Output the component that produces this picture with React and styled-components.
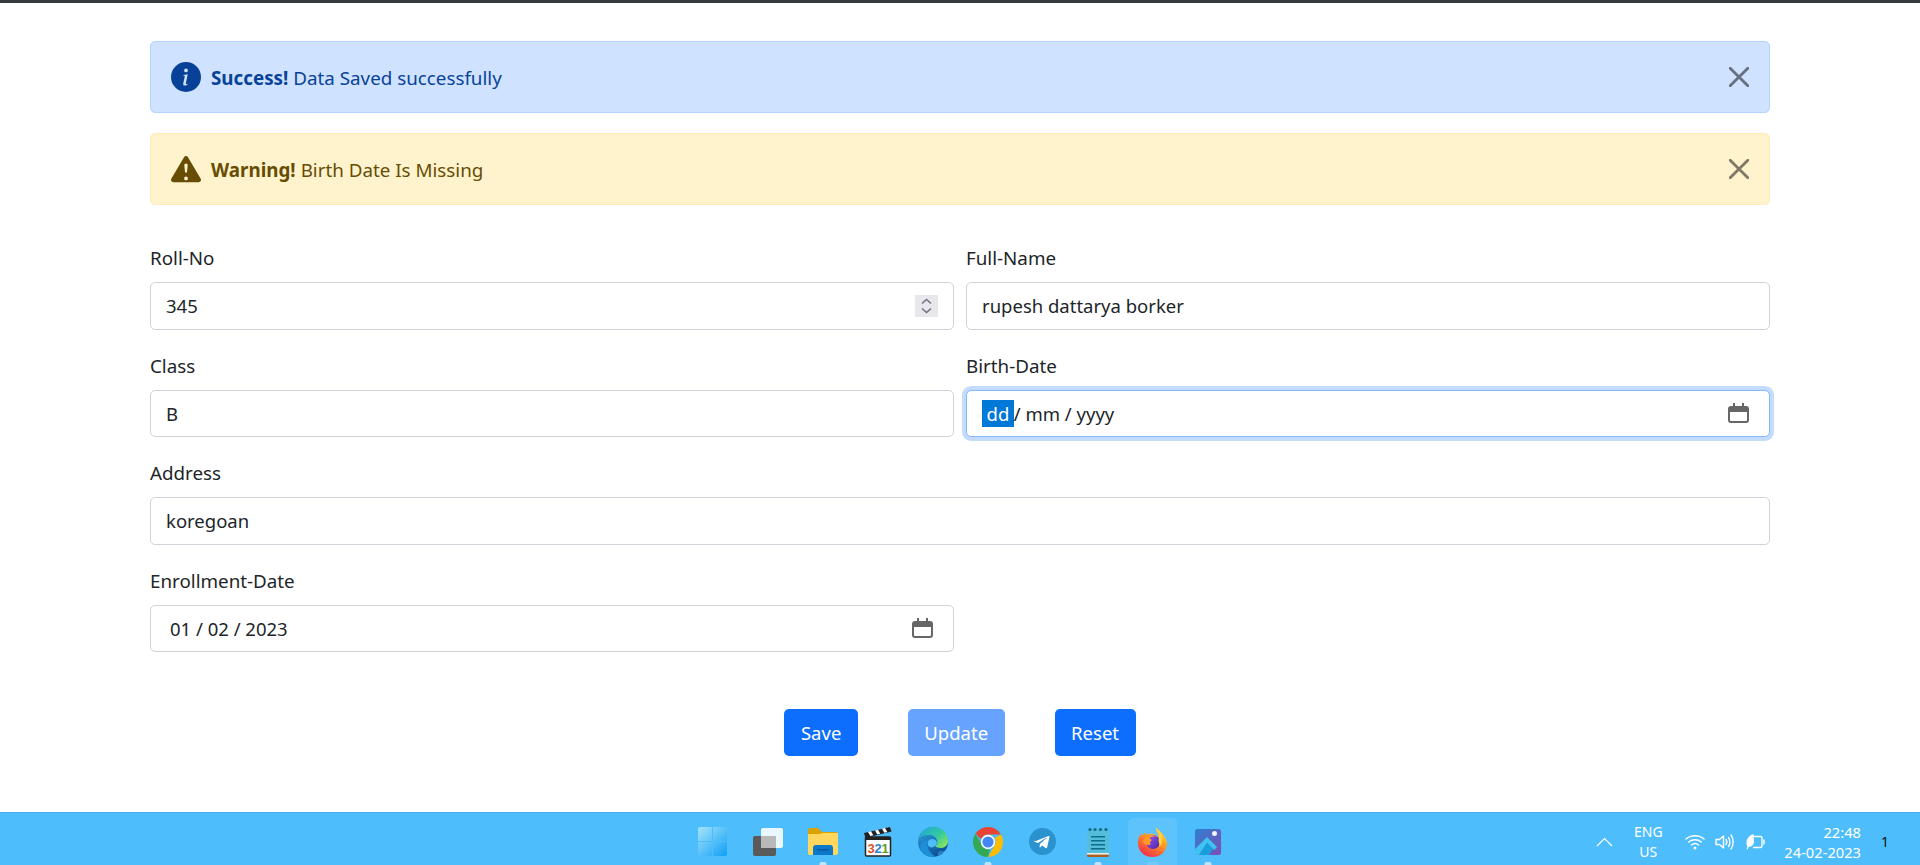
import React from 'react';
import styled, { createGlobalStyle } from 'styled-components';

const GlobalStyle = createGlobalStyle`
  * { box-sizing: border-box; }
  html, body { margin: 0; padding: 0; height: 865px; background: #fff; overflow: hidden; }
  body {
    font-family: 'Noto Sans', 'Open Sans', 'Liberation Sans', sans-serif;
    color: #212529;
  }
`;

const Page = styled.div`
  height: 865px;
  display: flex;
  flex-direction: column;
  border-top: 3px solid #343a40;
`;

const Container = styled.main`
  flex: 1;
  padding: 38px 150px 0;
`;

const Alert = styled.div`
  height: 72px;
  margin-bottom: 20px;
  padding: 0 20px;
  display: flex;
  align-items: center;
  border: 1px solid ${p => (p.$kind === 'warning' ? '#ffecb5' : '#b6d4fe')};
  border-radius: 5px;
  background: ${p => (p.$kind === 'warning' ? '#fff3cd' : '#cfe2ff')};
  color: ${p => (p.$kind === 'warning' ? '#664d03' : '#084298')};
  font-size: 18.8px;
  svg.lead { flex: none; margin-right: 10px; }
  strong { font-weight: 700; margin-right: 5px; }
`;

const AlertText = styled.span`
  flex: 1;
  padding-top: 2px;
`;

const CloseButton = styled.button`
  width: 20px;
  height: 20px;
  padding: 0;
  border: 0;
  background: none;
  display: flex;
  color: #000;
  opacity: 0.5;
`;

const FormGrid = styled.form`
  margin-top: 37px;
  display: grid;
  grid-template-columns: 1fr 1fr;
  column-gap: 12px;
  row-gap: 20px;
`;

const Field = styled.div`
  grid-column: ${p => (p.$wide ? '1 / -1' : 'auto')};
  display: flex;
  flex-direction: column;
`;

const Label = styled.label`
  height: 30px;
  margin-bottom: 10px;
  font-size: 18.8px;
  line-height: 32px;
`;

const InputBox = styled.div`
  height: 47.5px;
  padding: 0 15px;
  display: flex;
  align-items: center;
  justify-content: space-between;
  border: 1px solid ${p => (p.$focused ? '#86b7fe' : '#ced4da')};
  border-radius: 5px;
  background: #fff;
  font-size: 18.5px;
  box-shadow: ${p => (p.$focused ? '0 0 0 4px rgba(13, 110, 253, 0.25)' : 'none')};
`;

const InputValue = styled.span`
  white-space: pre;
`;

const DateValue = styled.span`
  padding-left: 4px;
  white-space: pre;
`;

const DateSegment = styled.span`
  display: inline-block;
  margin-left: -4px;
  padding: 0 4.5px;
  background: #0078d7;
  color: #fff;
  line-height: 27px;
`;

const Spinner = styled.span`
  width: 23px;
  height: 22px;
  display: flex;
  align-items: center;
  justify-content: center;
  background: #e7e7ec;
`;

const CalendarSlot = styled.span`
  display: flex;
  margin-right: 5px;
`;

const ButtonRow = styled.div`
  margin-top: 57px;
  display: flex;
  justify-content: center;
  gap: 50px;
`;

const Button = styled.button`
  height: 47px;
  padding: 0 16.5px;
  border: 0;
  border-radius: 5px;
  background: ${p => (p.disabled ? '#65a3fe' : '#0d6efd')};
  color: #fff;
  font-family: inherit;
  font-size: 18.5px;
`;

const Taskbar = styled.footer`
  height: 53px;
  padding-top: 5px;
  display: grid;
  grid-template-columns: 1fr auto 1fr;
  align-items: center;
  background: #4dbdfb;
  border-top: 1px solid #48aee8;
`;

const TaskIcons = styled.div`
  grid-column: 2;
  height: 100%;
  display: flex;
`;

const TaskSlot = styled.div`
  position: relative;
  width: 55px;
  height: 100%;
  display: flex;
  align-items: center;
  justify-content: center;
  &::before {
    content: '';
    display: ${p => (p.$active ? 'block' : 'none')};
    position: absolute;
    inset: 0 3px;
    border-radius: 5px 5px 0 0;
    background: rgba(255, 255, 255, 0.1);
  }
  &::after {
    content: '';
    display: ${p => (p.$running ? 'block' : 'none')};
    position: absolute;
    left: 50%;
    bottom: 0;
    width: ${p => (p.$active ? '12px' : '7px')};
    height: 3px;
    border-radius: 2px 2px 0 0;
    transform: translateX(-50%);
    background: ${p => (p.$active ? 'rgba(255, 255, 255, 0.12)' : '#bfe3fb')};
  }
  svg { position: relative; }
`;

const Tray = styled.div`
  grid-column: 3;
  display: flex;
  align-items: center;
  justify-content: flex-end;
  color: #fff;
`;

const Lang = styled.div`
  width: 36px;
  margin: 0 19px 0 17px;
  font-size: 14px;
  line-height: 20px;
  text-align: center;
`;

const TrayIcons = styled.div`
  display: flex;
  gap: 10px;
  margin-right: 19px;
`;

const Clock = styled.div`
  font-size: 14.7px;
  line-height: 20px;
  text-align: right;
`;

const Badge = styled.div`
  width: 59px;
  padding-right: 11px;
  color: #111;
  font-size: 14px;
  text-align: center;
`;

const InfoIcon = () => (
  <svg className="lead" width="30" height="30" viewBox="0 0 16 16" fill="currentColor">
    <path d="M8 16A8 8 0 1 0 8 0a8 8 0 0 0 0 16zm.93-9.41-1 4.7c-.07.34.03.53.3.53.2 0 .48-.07.68-.25l-.09.42c-.29.34-.91.59-1.45.59-.7 0-1-.42-.81-1.31l.74-3.47c.06-.3 0-.4-.3-.47l-.45-.08.08-.38 2.3-.28zM8 5.5a1 1 0 1 1 0-2 1 1 0 0 1 0 2z" />
  </svg>
);

const WarningIcon = () => (
  <svg className="lead" width="30" height="30" viewBox="0 0 16 16" fill="currentColor">
    <path d="M8.98 1.57a1.13 1.13 0 0 0-1.96 0L.16 13.23c-.46.78.1 1.77.98 1.77h13.72c.88 0 1.44-.99.98-1.77L8.98 1.57zM8 5c.54 0 .95.46.9 1l-.35 3.5a.55.55 0 0 1-1.1 0L7.1 6c-.05-.54.36-1 .9-1zm0 7a1 1 0 1 1 0 2 1 1 0 0 1 0-2z" />
  </svg>
);

const CloseIcon = () => (
  <svg width="20" height="20" viewBox="0 0 20 20" fill="none" stroke="currentColor" strokeWidth="2.8" strokeLinecap="round">
    <path d="M1.2 1.2l17.6 17.6M18.8 1.2L1.2 18.800" />
  </svg>
);

const CalendarIcon = () => (
  <svg width="21" height="20" viewBox="0 0 21 20">
    <path fill="#666" d="M5 0h2v3h7V0h2v3h2a3 3 0 0 1 3 3v11a3 3 0 0 1-3 3H3a3 3 0 0 1-3-3V6a3 3 0 0 1 3-3h2zM2 9v8a1 1 0 0 0 1 1h15a1 1 0 0 0 1-1V9z" />
  </svg>
);

const SpinnerIcon = () => (
  <svg width="13" height="18" viewBox="0 0 13 18" fill="none" stroke="#74747e" strokeWidth="1.6">
    <path d="M2 6.5l4.5-4 4.5 4M2 11.5l4.5 4 4.5-4" />
  </svg>
);

const WindowsIcon = () => (
  <svg width="29" height="29" viewBox="0 0 29 29">
    <defs>
      <linearGradient id="win" x1="0" y1="0" x2="1" y2="1">
        <stop offset="0" stopColor="#a5e4fc" />
        <stop offset="1" stopColor="#0f9ff5" />
      </linearGradient>
    </defs>
    <path fill="url(#win)" d="M2 0h12v14H0V2a2 2 0 0 1 2-2zM15 0h12a2 2 0 0 1 2 2v12H15zM0 15h14v14H2a2 2 0 0 1-2-2zM15 15h14v12a2 2 0 0 1-2 2H15z" />
  </svg>
);

const TaskViewIcon = () => (
  <svg width="30" height="28" viewBox="0 0 30 28">
    <rect x="0" y="8" width="23" height="20" rx="2" fill="#5a5a5a" />
    <rect x="8" y="0" width="22" height="20" rx="2" fill="#fff" fillOpacity="0.88" />
    <rect x="8" y="8" width="15" height="12" fill="#b9b9b9" />
  </svg>
);

const FolderIcon = () => (
  <svg width="30" height="27" viewBox="0 0 30 27">
    <path fill="#dba200" d="M0 3a3 3 0 0 1 3-3h7l4 4h13a3 3 0 0 1 3 3v5H0z" />
    <path fill="#ffd75e" d="M0 6h12l3-1h15v20a2 2 0 0 1-2 2H2a2 2 0 0 1-2-2z" />
    <path fill="#0b78c9" d="M5 27v-7a3 3 0 0 1 3-3h14a3 3 0 0 1 3 3v7z" />
    <path fill="#0a5aa0" d="M9 21h12v1.6H9z" />
  </svg>
);

const ClapperIcon = () => (
  <svg width="30" height="30" viewBox="0 0 30 30">
    <rect x="2.500" y="10" width="25" height="19" rx="1" fill="#fff" stroke="#222" strokeWidth="1.500" />
    <path fill="#222" d="M1 6l26-6 1.500 4.500L2.500 11z" />
    <path fill="#fff" d="M5 5l3-.7 2.300 4-3 .7zM12 3.400l3-.7 2.300 4-3 .7zM19 1.800l3-.7 2.300 4-3 .7z" />
    <path fill="#222" d="M2.500 10h25v3h-25z" />
    <text x="15" y="26" textAnchor="middle" fontFamily="'Liberation Sans', sans-serif" fontSize="13" fontWeight="700" letterSpacing="-0.3">
      <tspan fill="#d9541e">3</tspan>
      <tspan fill="#2f7fc4">2</tspan>
      <tspan fill="#5aa02c">1</tspan>
    </text>
  </svg>
);

const EdgeIcon = () => (
  <svg width="30" height="30" viewBox="0 0 30 30">
    <defs>
      <linearGradient id="edge" x1="0" y1="0" x2="0.6" y2="1">
        <stop offset="0" stopColor="#2fa8e4" />
        <stop offset="1" stopColor="#0c4f96" />
      </linearGradient>
      <linearGradient id="edgeGreen" x1="0" y1="0" x2="1" y2="0.8">
        <stop offset="0" stopColor="#1ea7d6" />
        <stop offset="0.6" stopColor="#35c9a0" />
        <stop offset="1" stopColor="#86e65f" />
      </linearGradient>
    </defs>
    <circle cx="15" cy="15" r="15" fill="url(#edge)" />
    <path fill="url(#edgeGreen)" d="M1 11C3 4 9 0 15 0c9 0 15 6 15 14 0 4-3 7-7 7-3 0-5-1-6-2 2-1 3-3 2-6-1-3-4-5-8-5-4 0-8 1-10 3z" />
    <path fill="#4dbdfb" d="M17 19c-2 2-6 2-7-1-1-3 1-6 4-6 3 0 5 2 5 4 0 1-1 2-2 3z" />
    <path fill="#1c8fd6" d="M10 13c-2 6 1 13 7 16-1 .6-1.500 1-2 1-6 0-11-3-13-9 0-5 4-8 8-8z" />
    <path fill="#4dbdfb" fillOpacity="0.4" d="M20 29c4-1 7-3 9-6-3 1-5 1-7 1-2 1-3 3-2 5z" />
  </svg>
);

const ChromeIcon = () => (
  <svg width="30" height="30" viewBox="0 0 30 30">
    <path fill="#ea4335" d="M15 0a15 15 0 0 1 13 7.5H15a7.5 7.5 0 0 0-7 4.8L2.6 6.6A15 15 0 0 1 15 0z" />
    <path fill="#fbbc04" d="M28 7.5A15 15 0 0 1 15 30l6.5-11.2A7.5 7.5 0 0 0 21.5 11z" />
    <path fill="#34a853" d="M15 30A15 15 0 0 1 2.6 6.6L9 18a7.5 7.5 0 0 0 8 4.3z" />
    <circle cx="15" cy="15" r="7.2" fill="#fff" />
    <circle cx="15" cy="15" r="5.6" fill="#4285f4" />
  </svg>
);

const TelegramIcon = () => (
  <svg width="27" height="27" viewBox="0 0 27 27">
    <circle cx="13.5" cy="13.5" r="13.5" fill="#2a93cf" />
    <path fill="#fff" d="M5.5 13.6l14-5.6c.7-.2 1.2.2 1 1l-2.4 10.6c-.2.8-.7.9-1.3.6l-3.6-2.7-1.8 1.7c-.3.3-.5.4-.8.4l.3-3.6 6.6-6c.3-.3 0-.4-.4-.2l-8.1 5.1-3.5-1.1c-.8-.2-.8-.7 0-1.2z" />
  </svg>
);

const NotepadIcon = () => (
  <svg width="22" height="30" viewBox="0 0 22 30">
    <rect x="0" y="2" width="22" height="26" rx="1.5" fill="#55bdd8" />
    <path fill="#a85f20" d="M0 26h22v2.5a1.5 1.5 0 0 1-1.5 1.5h-19A1.5 1.5 0 0 1 0 28.500z" />
    <path fill="#eee" d="M0 26h22v1.600H0z" />
    <circle cx="3" cy="2.500" r="1.600" fill="#0d6c8e" />
    <circle cx="8" cy="2.500" r="1.600" fill="#0d6c8e" />
    <circle cx="13.500" cy="2.500" r="1.600" fill="#0d6c8e" />
    <circle cx="19" cy="2.500" r="1.600" fill="#0d6c8e" />
    <path fill="#0d6c8e" d="M4 9h14v1.600H4zM4 13h14v1.600H4zM4 17h14v1.600H4zM4 21h14v1.600H4z" />
  </svg>
);

const FirefoxIcon = () => (
  <svg width="29" height="30" viewBox="0 0 29 30">
    <defs>
      <linearGradient id="fox" x1="0.8" y1="0" x2="0.2" y2="1">
        <stop offset="0" stopColor="#ffe14a" />
        <stop offset="0.4" stopColor="#ff9b1f" />
        <stop offset="1" stopColor="#f2254f" />
      </linearGradient>
      <linearGradient id="foxCore" x1="0" y1="0" x2="1" y2="1">
        <stop offset="0" stopColor="#9a5cf5" />
        <stop offset="1" stopColor="#4b22a8" />
      </linearGradient>
    </defs>
    <path fill="url(#fox)" d="M18 0c1 3 5 4 8 9 2 3 3 5 3 7 0 8-6 14-14.500 14S0 24 0 16c0-3 .5-5 1.500-7 .5-1 1-2 1.500-2.500 0 1 .3 2 1 2.500.7-2 2.500-3 5-3.500-1 .8-1.500 1.500-1.500 2.500 2-1 5-1.500 7.500-1 2.500.5 4.500 2 5.500 3.500C21 7 17 4 18 0z" />
    <circle cx="15" cy="15" r="7" fill="url(#foxCore)" />
    <path fill="#ff9a24" d="M5 15c.5-4 5-7 9-6.800 2 .1 3.500.7 4.500 1.800-2.500-.8-6-.5-7 2 1 0 2 .3 2.500 1-2 1-2.500 3-1.500 5-4 .5-7-1-7.500-3z" />
    <path fill="#ffd53d" d="M21 3c2 3 4 7 3 12-.5 3-2 4-3 5 .5-2 .5-4-.5-6 1-4 .5-8 .5-11z" />
  </svg>
);

const PhotosIcon = () => (
  <svg width="26" height="26" viewBox="0 0 26 26">
    <defs>
      <linearGradient id="photo" x1="0" y1="0" x2="1" y2="1">
        <stop offset="0" stopColor="#2d7fd1" />
        <stop offset="1" stopColor="#7c4fb5" />
      </linearGradient>
    </defs>
    <rect width="26" height="26" rx="2.500" fill="url(#photo)" />
    <circle cx="19.500" cy="4.500" r="2.500" fill="#f3f3f3" />
    <path fill="#3fc4f2" d="M0 20L12 8l10 10-3 3-7-7-8 12H2a2 2 0 0 1-2-2z" />
    <path fill="#17a0dc" d="M12 14l6 6-4 6H4z" />
  </svg>
);

const WifiIcon = () => (
  <svg width="20" height="20" viewBox="0 0 20 20" fill="none" stroke="#fff" strokeWidth="1.500" strokeLinecap="round">
    <path d="M1 7c5-4.500 13-4.500 18 0M3.800 10c3.500-3 9-3 12.400 0M6.500 13c2-1.600 5-1.600 7 0" />
    <circle cx="10" cy="16" r="1.500" fill="#fff" stroke="none" />
  </svg>
);

const VolumeIcon = () => (
  <svg width="20" height="20" viewBox="0 0 20 20" fill="none" stroke="#fff" strokeWidth="1.400" strokeLinecap="round" strokeLinejoin="round">
    <path d="M1 7.500h3.500L8.500 4v12l-4-3.500H1zM11 7.500c1 1.500 1 3.500 0 5M13.500 5.500c1.800 2.500 1.800 6.500 0 9M16 3c2.800 4 2.800 10 0 14" />
  </svg>
);

const BatteryIcon = () => (
  <svg width="20" height="20" viewBox="0 0 20 20" fill="none" stroke="#fff" strokeWidth="1.400">
    <path d="M8 4.500h7.500a1.500 1.500 0 0 1 1.500 1.500v8a1.500 1.500 0 0 1-1.500 1.500H8" />
    <path d="M19 8v4" strokeLinecap="round" />
    <path fill="#fff" stroke="none" d="M8.500 2C4 3.500 1 7 1.500 12c.1 1.200.5 2 1 2.500L1.500 17l1 .4 1-2.400c3.500 0 6-3 5.500-6.500-.2-2-.4-4.500-.5-6.500z" />
  </svg>
);

const ChevronIcon = () => (
  <svg width="17" height="10" viewBox="0 0 17 10" fill="none" stroke="#fff" strokeWidth="1.200">
    <path d="M1 9l7.500-7.500L16 9" />
  </svg>
);

const taskApps = [
  { id: 'windows', Icon: WindowsIcon },
  { id: 'taskview', Icon: TaskViewIcon },
  { id: 'explorer', Icon: FolderIcon, running: true },
  { id: 'mpc', Icon: ClapperIcon },
  { id: 'edge', Icon: EdgeIcon },
  { id: 'chrome', Icon: ChromeIcon, running: true },
  { id: 'telegram', Icon: TelegramIcon },
  { id: 'notepad', Icon: NotepadIcon, running: true },
  { id: 'firefox', Icon: FirefoxIcon, running: true, active: true },
  { id: 'photos', Icon: PhotosIcon, running: true },
];

const App = () => (
  <Page>
    <GlobalStyle />
    <Container>
      <Alert>
        <InfoIcon />
        <AlertText><strong>Success!</strong>Data Saved successfully</AlertText>
        <CloseButton type="button" aria-label="Close"><CloseIcon /></CloseButton>
      </Alert>
      <Alert $kind="warning">
        <WarningIcon />
        <AlertText><strong>Warning!</strong>Birth Date Is Missing</AlertText>
        <CloseButton type="button" aria-label="Close"><CloseIcon /></CloseButton>
      </Alert>

      <FormGrid>
        <Field>
          <Label>Roll-No</Label>
          <InputBox>
            <InputValue>345</InputValue>
            <Spinner><SpinnerIcon /></Spinner>
          </InputBox>
        </Field>
        <Field>
          <Label>Full-Name</Label>
          <InputBox><InputValue>rupesh dattarya borker</InputValue></InputBox>
        </Field>
        <Field>
          <Label>Class</Label>
          <InputBox><InputValue>B</InputValue></InputBox>
        </Field>
        <Field>
          <Label>Birth-Date</Label>
          <InputBox $focused>
            <DateValue><DateSegment>dd</DateSegment>/ mm / yyyy</DateValue>
            <CalendarSlot><CalendarIcon /></CalendarSlot>
          </InputBox>
        </Field>
        <Field $wide>
          <Label>Address</Label>
          <InputBox><InputValue>koregoan</InputValue></InputBox>
        </Field>
        <Field>
          <Label>Enrollment-Date</Label>
          <InputBox>
            <DateValue>01 / 02 / 2023</DateValue>
            <CalendarSlot><CalendarIcon /></CalendarSlot>
          </InputBox>
        </Field>
      </FormGrid>

      <ButtonRow>
        <Button type="button">Save</Button>
        <Button type="button" disabled>Update</Button>
        <Button type="button">Reset</Button>
      </ButtonRow>
    </Container>

    <Taskbar>
      <TaskIcons>
        {taskApps.map(({ id, Icon, running, active }) => (
          <TaskSlot key={id} $running={running} $active={active}><Icon /></TaskSlot>
        ))}
      </TaskIcons>
      <Tray>
        <ChevronIcon />
        <Lang>ENG<br />US</Lang>
        <TrayIcons>
          <WifiIcon />
          <VolumeIcon />
          <BatteryIcon />
        </TrayIcons>
        <Clock>22:48<br />24-02-2023</Clock>
        <Badge>1</Badge>
      </Tray>
    </Taskbar>
  </Page>
);

export default App;
